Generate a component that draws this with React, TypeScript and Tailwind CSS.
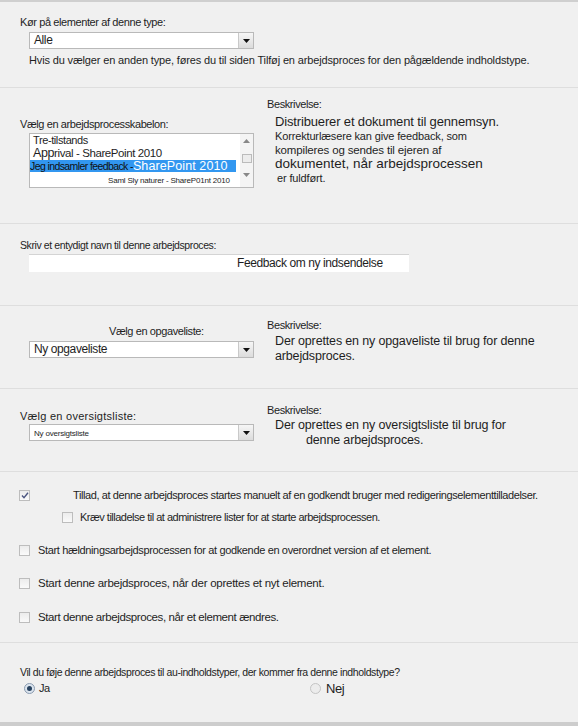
import React from "react";

function Arrow() {
  return (
    <div className="flex h-[15px] w-[15px] items-center justify-center border-l border-[#c9c9c9] bg-gradient-to-b from-[#f6f6f6] to-[#dcdcdc]">
      <svg width="7" height="4" viewBox="0 0 7 4">
        <path d="M0 0h7L3.5 4z" fill="#111" />
      </svg>
    </div>
  );
}

function Select({ children }: { children: React.ReactNode }) {
  return (
    <div className="flex h-[17px] w-[225px] items-center justify-between border border-[#b9b9b9] bg-white">
      <div className="whitespace-nowrap pl-[4px] leading-[15px]">{children}</div>
      <Arrow />
    </div>
  );
}

function Check({ checked = false }: { checked?: boolean }) {
  return (
    <span className="flex h-[11px] w-[11px] shrink-0 items-center justify-center border border-[#bdbdbd] bg-gradient-to-b from-[#ececec] to-[#fafafa]">
      {checked && (
        <svg width="8" height="7" viewBox="0 0 8 7">
          <path d="M1 3.5l2 2.2L7 0.8" stroke="#4b5580" strokeWidth="1.4" fill="none" />
        </svg>
      )}
    </span>
  );
}

function Radio({ on = false }: { on?: boolean }) {
  return (
    <span
      className={
        "flex h-[11px] w-[11px] items-center justify-center rounded-full border " +
        (on ? "border-[#8a9bb0] bg-[#dbe4ee]" : "border-[#c4c4c4] bg-[#ececec]")
      }
    >
      {on && <span className="h-[5px] w-[5px] rounded-full bg-[#27415e]" />}
    </span>
  );
}

function Beskrivelse() {
  return <div className="h-[14px] text-[11px] leading-[14px]">Beskrivelse:</div>;
}

export default function App() {
  return (
    <div className="flex h-[726px] w-[578px] flex-col bg-[#f0f0f0] font-['Liberation_Sans',Arial,sans-serif] text-[11px] tracking-[-0.4px] text-[#1e1e1e]">
      <div className="h-[2px] bg-[#cfcfcf]" />

      {/* type */}
      <div className="h-[86px] border-b border-[#dedede] pl-[20px] pt-[13px]">
        <div className="h-[14px] leading-[14px]">Kør på elementer af denne type:</div>
        <div className="mt-[3px] pl-[9px]">
          <Select>
            <span className="text-[12px]">Alle</span>
          </Select>
        </div>
        <div className="mt-[4px] h-[14px] whitespace-nowrap pl-[9px] leading-[14px] tracking-[-0.15px]">
          Hvis du vælger en anden type, føres du til siden Tilføj en arbejdsproces for den pågældende indholdstype.
        </div>
      </div>

      {/* template */}
      <div className="flex h-[136px] border-b border-[#dedede] pl-[20px]">
        <div className="w-[247px] pt-[29px]">
          <div className="h-[14px] leading-[14px]">Vælg en arbejdsprocesskabelon:</div>
          <div className="ml-[9px] mt-[2px] flex h-[55px] w-[225px] border border-[#b9b9b9] bg-white">
            <div className="flex-1 overflow-hidden whitespace-nowrap">
              <div className="h-[13px] pl-[3px] text-[11px] leading-[13px]">Tre-tilstands</div>
              <div className="h-[12px] pl-[3px] text-[11.5px] leading-[12px]">
                <span className="text-[12.5px] leading-[12px]">App</span>rival - SharePoint 2010
              </div>
              <div className="mr-[4px] mt-[1px] flex h-[12px] items-end bg-[#3297f0] leading-[11px]">
                <span className="text-[10.5px] tracking-[-0.6px] text-[#111]">Jeg indsamler feedback -</span>
                <span className="text-[12.5px] leading-[11px] tracking-[0.1px] text-white">SharePoint 2010</span>
              </div>
              <div className="pl-[78px] pt-[4px] text-[8px] leading-[9px] tracking-[-0.2px]">
                Saml Sly naturer - ShareP01nt 2010
              </div>
            </div>
            <div className="flex w-[13px] flex-col items-center bg-[#f4f4f4]">
              <svg className="mt-[5px]" width="7" height="4" viewBox="0 0 7 4">
                <path d="M0 4h7L3.5 0z" fill="#888" />
              </svg>
              <div className="mt-[11px] h-[9px] w-[10px] border border-[#bbb] bg-[#ececec]" />
              <svg className="mt-[10px]" width="7" height="4" viewBox="0 0 7 4">
                <path d="M0 0h7L3.5 4z" fill="#888" />
              </svg>
            </div>
          </div>
        </div>
        <div className="whitespace-nowrap pt-[9px]">
          <Beskrivelse />
          <div className="mt-[4px] pl-[8px] tracking-[-0.15px]">
            <div className="h-[14px] text-[13px] leading-[14px]">Distribuerer et dokument til gennemsyn.</div>
            <div className="h-[14px] text-[11px] leading-[14px]">Korrekturlæsere kan give feedback, som</div>
            <div className="h-[14px] text-[11.5px] leading-[14px]">kompileres og sendes til ejeren af</div>
            <div className="h-[14px] text-[13.5px] leading-[14px] tracking-[0px]">dokumentet, når arbejdsprocessen</div>
            <div className="h-[14px] pl-[2px] text-[11px] leading-[14px]">er fuldført.</div>
          </div>
        </div>
      </div>

      {/* name */}
      <div className="h-[82px] border-b border-[#dedede] pl-[20px] pt-[14px]">
        <div className="h-[14px] text-[10.5px] leading-[14px]">Skriv et entydigt navn til denne arbejdsproces:</div>
        <div className="ml-[9px] mt-[2px] h-[18px] w-[380px] whitespace-nowrap border-t border-[#d4d4d4] bg-white pl-[208px] text-[12px] leading-[17px]">
          Feedback om ny indsendelse
        </div>
      </div>

      {/* task list */}
      <div className="flex h-[83px] border-b border-[#dedede] pl-[20px]">
        <div className="w-[247px] pt-[18px]">
          <div className="h-[14px] pl-[89px] leading-[14px]">Vælg en opgaveliste:</div>
          <div className="mt-[3px] pl-[9px]">
            <Select>
              <span className="text-[12px]">Ny opgaveliste</span>
            </Select>
          </div>
        </div>
        <div className="whitespace-nowrap pt-[12px]">
          <Beskrivelse />
          <div className="mt-[2px] pl-[8px] text-[12.5px] leading-[15px] tracking-[-0.15px]">
            <div>Der oprettes en ny opgaveliste til brug for denne</div>
            <div>arbejdsproces.</div>
          </div>
        </div>
      </div>

      {/* history list */}
      <div className="flex h-[83px] border-b border-[#dedede] pl-[20px]">
        <div className="w-[247px] pt-[20px]">
          <div className="h-[14px] leading-[14px] tracking-[0.25px]">Vælg en oversigtsliste:</div>
          <div className="mt-[1px] pl-[9px]">
            <Select>
              <span className="text-[8px] tracking-[-0.2px]">Ny oversigtsliste</span>
            </Select>
          </div>
        </div>
        <div className="whitespace-nowrap pt-[14px]">
          <Beskrivelse />
          <div className="mt-[1px] pl-[8px] text-[12.5px] leading-[15px] tracking-[-0.15px]">
            <div>Der oprettes en ny oversigtsliste til brug for</div>
            <div className="pl-[31px]">denne arbejdsproces.</div>
          </div>
        </div>
      </div>

      {/* start options */}
      <div className="flex h-[171px] flex-col whitespace-nowrap border-b border-[#dedede] pl-[19px] pt-[16px]">
        <div className="flex h-[14px] items-center">
          <Check checked />
          <span className="ml-[43px] leading-[14px]">
            Tillad, at denne arbejdsproces startes manuelt af en godkendt bruger med redigeringselementtilladelser.
          </span>
        </div>
        <div className="mt-[8px] flex h-[14px] items-center pl-[43px]">
          <Check />
          <span className="ml-[7px] leading-[14px] tracking-[-0.5px]">
            Kræv tilladelse til at administrere lister for at starte arbejdsprocessen.
          </span>
        </div>
        <div className="mt-[19px] flex h-[14px] items-center">
          <Check />
          <span className="ml-[8px] leading-[14px] tracking-[-0.35px]">
            Start hældningsarbejdsprocessen for at godkende en overordnet version af et element.
          </span>
        </div>
        <div className="mt-[19px] flex h-[14px] items-center">
          <Check />
          <span className="ml-[8px] text-[11.5px] leading-[14px] tracking-[-0.25px]">
            Start denne arbejdsproces, når der oprettes et nyt element.
          </span>
        </div>
        <div className="mt-[20px] flex h-[14px] items-center">
          <Check />
          <span className="ml-[8px] text-[11.5px] leading-[14px]">Start denne arbejdsproces, når et element ændres.</span>
        </div>
      </div>

      {/* child content types */}
      <div className="flex-1 whitespace-nowrap pl-[20px] pt-[22px]">
        <div className="h-[14px] text-[10.5px] leading-[14px]">
          Vil du føje denne arbejdsproces til au-indholdstyper, der kommer fra denne indholdstype?
        </div>
        <div className="mt-[2px] flex h-[15px] items-center">
          <div className="flex w-[290px] items-center pl-[4px]">
            <Radio on />
            <span className="ml-[4px]">Ja</span>
          </div>
          <div className="flex items-center">
            <Radio />
            <span className="ml-[5px] text-[13px]">Nej</span>
          </div>
        </div>
      </div>

      <div className="h-[4px] bg-[#cdcdcd]" />
    </div>
  );
}
